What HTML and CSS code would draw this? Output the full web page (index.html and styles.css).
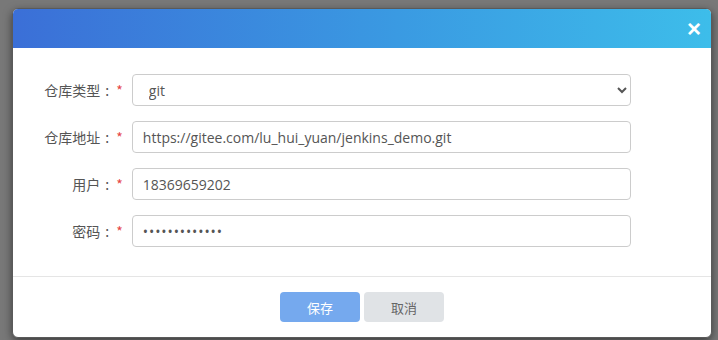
FILE: index.html
```html
<!DOCTYPE html>
<html lang="zh-CN">
<head>
    <meta charset="UTF-8">
    <title>仓库配置</title>
    <link rel="stylesheet" href="styles.css">
</head>
<body>
    <div class="backdrop">
        <div class="modal">
            <div class="modal-header">
                <span class="close">&times;</span>
            </div>

            <form class="modal-body">
                <div class="form-row">
                    <label class="form-label">仓库类型<b>:</b><i>*</i></label>
                    <select class="form-control">
                        <option selected>git</option>
                        <option>svn</option>
                    </select>
                </div>
                <div class="form-row">
                    <label class="form-label">仓库地址<b>:</b><i>*</i></label>
                    <input class="form-control" type="text" value="https://gitee.com/lu_hui_yuan/jenkins_demo.git">
                </div>
                <div class="form-row">
                    <label class="form-label">用户<b>:</b><i>*</i></label>
                    <input class="form-control" type="text" value="18369659202">
                </div>
                <div class="form-row">
                    <label class="form-label">密码<b>:</b><i>*</i></label>
                    <input class="form-control pwd" type="password" value="1234567890123">
                </div>
            </form>

            <div class="modal-footer">
                <button class="btn btn-primary">保存</button>
                <button class="btn btn-default">取消</button>
            </div>
        </div>
    </div>
</body>
</html>
```

FILE: styles.css
```css
* {
    margin: 0;
    padding: 0;
    box-sizing: border-box;
}

body {
    font-family: "Open Sans", "Noto Sans CJK SC", sans-serif;
    font-size: 14px;
    color: #555;
    background: #787878;
    width: 718px;
    height: 340px;
    overflow: hidden;
}

.backdrop {
    height: 340px;
    padding: 8px 6px 2px 12px;
}

.modal {
    width: 700px;
    height: 330px;
    background: #fff;
    border-radius: 6px;
    border: 1px solid #5a5a5a;
    box-shadow: 0 3px 9px rgba(0, 0, 0, 0.5);
    overflow: hidden;
    display: flex;
    flex-direction: column;
}

.modal-header {
    height: 39px;
    background: linear-gradient(90deg, #3b6fd7 0%, #3a9ae2 55%, #3dbdea 100%);
    display: flex;
    align-items: center;
    justify-content: flex-end;
    padding-right: 10px;
}

.close {
    color: #fff;
    font-family: "Liberation Sans", sans-serif;
    font-size: 24px;
    font-weight: bold;
    line-height: 1;
    cursor: pointer;
}

.modal-body {
    flex: 1;
    padding: 26px 80px 0 0;
    border-bottom: 1px solid #e5e5e5;
    display: flex;
    flex-direction: column;
    gap: 15px;
}

.form-row {
    display: flex;
    align-items: center;
}

.form-label {
    width: 119px;
    padding-right: 9px;
    text-align: right;
    font-family: "Noto Sans CJK SC", sans-serif;
    font-size: 14px;
    color: #555;
}

.form-label b {
    font-weight: normal;
    display: inline-block;
    width: 14px;
    text-align: center;
}

.form-label i {
    font-style: normal;
    color: #e64545;
    padding-left: 2px;
}

.form-control {
    width: 500px;
    height: 32px;
    padding: 0 10px;
    border: 1px solid #ccc;
    border-radius: 4px;
    font-family: "Open Sans", "Noto Sans CJK SC", sans-serif;
    font-size: 14px;
    color: #555;
    background: #fff;
    outline: none;
}

select.form-control {
    padding-left: 12px;
}

.pwd {
    letter-spacing: 0.9px;
}

.modal-footer {
    height: 60px;
    display: flex;
    justify-content: center;
    align-items: center;
    gap: 4px;
}

.btn {
    width: 80px;
    height: 30px;
    border: none;
    border-radius: 4px;
    font-family: "Noto Sans CJK SC", sans-serif;
    font-size: 13px;
    cursor: pointer;
}

.btn-primary {
    background: #75a9ee;
    color: #fff;
}

.btn-default {
    background: #e0e3e6;
    color: #666;
}
```
